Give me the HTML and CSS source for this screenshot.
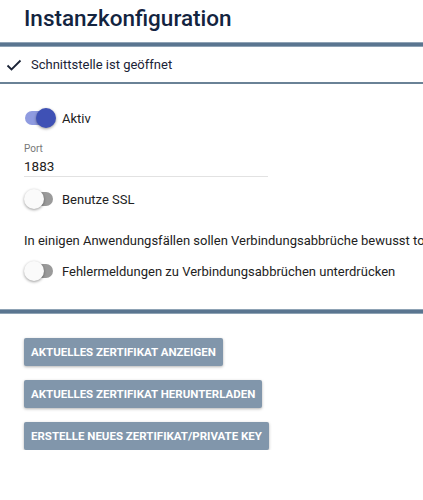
FILE: index.html
```html
<!DOCTYPE html>
<html lang="de">
<head>
    <meta charset="UTF-8" />
    <title>Instanzkonfiguration</title>
    <link rel="stylesheet" href="styles.css">
</head>
<body>
   <div class="page">
       <h1 class="title">Instanzkonfiguration</h1>
       <div class="rule-thick"></div>
       <div class="status">
           <svg class="check" width="16" height="12" viewBox="0 0 16 12">
               <path d="M1.5 6.5 L5.5 10.5 L14.5 1.5" fill="none" stroke="#1a2336" stroke-width="1.8"/>
           </svg>
           <span>Schnittstelle ist geöffnet</span>
       </div>
       <div class="rule-thin"></div>

       <div class="form">
           <label class="switch-row">
               <span class="switch on"><span class="track"></span><span class="knob"></span></span>
               <span class="switch-label">Aktiv</span>
           </label>

           <div class="field">
               <div class="field-label">Port</div>
               <div class="field-value">1883</div>
           </div>

           <label class="switch-row">
               <span class="switch"><span class="track"></span><span class="knob"></span></span>
               <span class="switch-label">Benutze SSL</span>
           </label>

           <p class="hint">In einigen Anwendungsfällen sollen Verbindungsabbrüche bewusst toleriert werden.</p>

           <label class="switch-row">
               <span class="switch"><span class="track"></span><span class="knob"></span></span>
               <span class="switch-label">Fehlermeldungen zu Verbindungsabbrüchen unterdrücken</span>
           </label>
       </div>

       <div class="rule-thick"></div>

       <div class="actions">
           <button class="btn">Aktuelles Zertifikat anzeigen</button>
           <button class="btn">Aktuelles Zertifikat herunterladen</button>
           <button class="btn">Erstelle neues Zertifikat/Private Key</button>
       </div>
   </div>
</body>
</html>
```

FILE: styles.css
```css
*{
    padding:0;
    margin:0;
    box-sizing:border-box;
}
body{
    background:#fff;
    font-family:Roboto, "Liberation Sans", sans-serif;
    color:#222;
    overflow:hidden;
}
.page{
    width:423px;
    overflow:hidden;
}
.title{
    font-size:22.5px;
    font-weight:500;
    color:#13243f;
    padding:5px 0 0 24px;
    height:42px;
    line-height:26px;
}
.rule-thick{
    height:5px;
    background:#5a7590;
    border-top:1px solid #8fa3b5;
    border-bottom:1px solid #8fa3b5;
}
.status{
    display:flex;
    align-items:center;
    height:35px;
    padding-left:6px;
    font-size:13px;
    color:#1a2336;
}
.check{
    margin-right:9px;
}
.rule-thin{
    height:2px;
    background:#6a8296;
}
.form{
    padding:22px 0 0 24px;
    height:225px;
    white-space:nowrap;
}
.switch-row{
    display:flex;
    align-items:center;
    height:24px;
}
.switch{
    position:relative;
    width:30px;
    height:20px;
    margin-right:8px;
}
.track{
    position:absolute;
    left:1px;
    top:3px;
    width:28px;
    height:14px;
    border-radius:7px;
    background:#9a9a9a;
}
.knob{
    position:absolute;
    left:0;
    top:0;
    width:20px;
    height:20px;
    border-radius:50%;
    background:#fafafa;
    box-shadow:0 1px 3px rgba(0,0,0,0.4);
}
.switch.on .track{
    background:#8f9be0;
}
.switch.on .knob{
    left:12px;
    background:#3f51b5;
}
.switch-label{
    font-size:13px;
    color:#222;
}
.field{
    width:244px;
    margin-top:13px;
    border-bottom:1px solid #e2e2e2;
}
.field-label{
    font-size:10px;
    color:#777;
    line-height:12px;
}
.field-value{
    font-size:13.5px;
    line-height:20px;
    margin-top:1px;
    color:#222;
}
.field + .switch-row{
    margin-top:10px;
}
.hint{
    font-size:13px;
    line-height:20px;
    margin-top:20px;
    color:#222;
}
.hint + .switch-row{
    margin-top:8px;
}
.actions{
    display:flex;
    flex-direction:column;
    align-items:flex-start;
    gap:14px;
    padding:24px 0 0 24px;
}
.btn{
    height:28px;
    padding:0 7px;
    border:none;
    border-radius:2px;
    background:#8196ab;
    color:#fff;
    font-family:Roboto, "Liberation Sans", sans-serif;
    font-size:11.5px;
    font-weight:700;
    text-transform:uppercase;
    box-shadow:0 1px 3px rgba(0,0,0,0.3);
}
```
